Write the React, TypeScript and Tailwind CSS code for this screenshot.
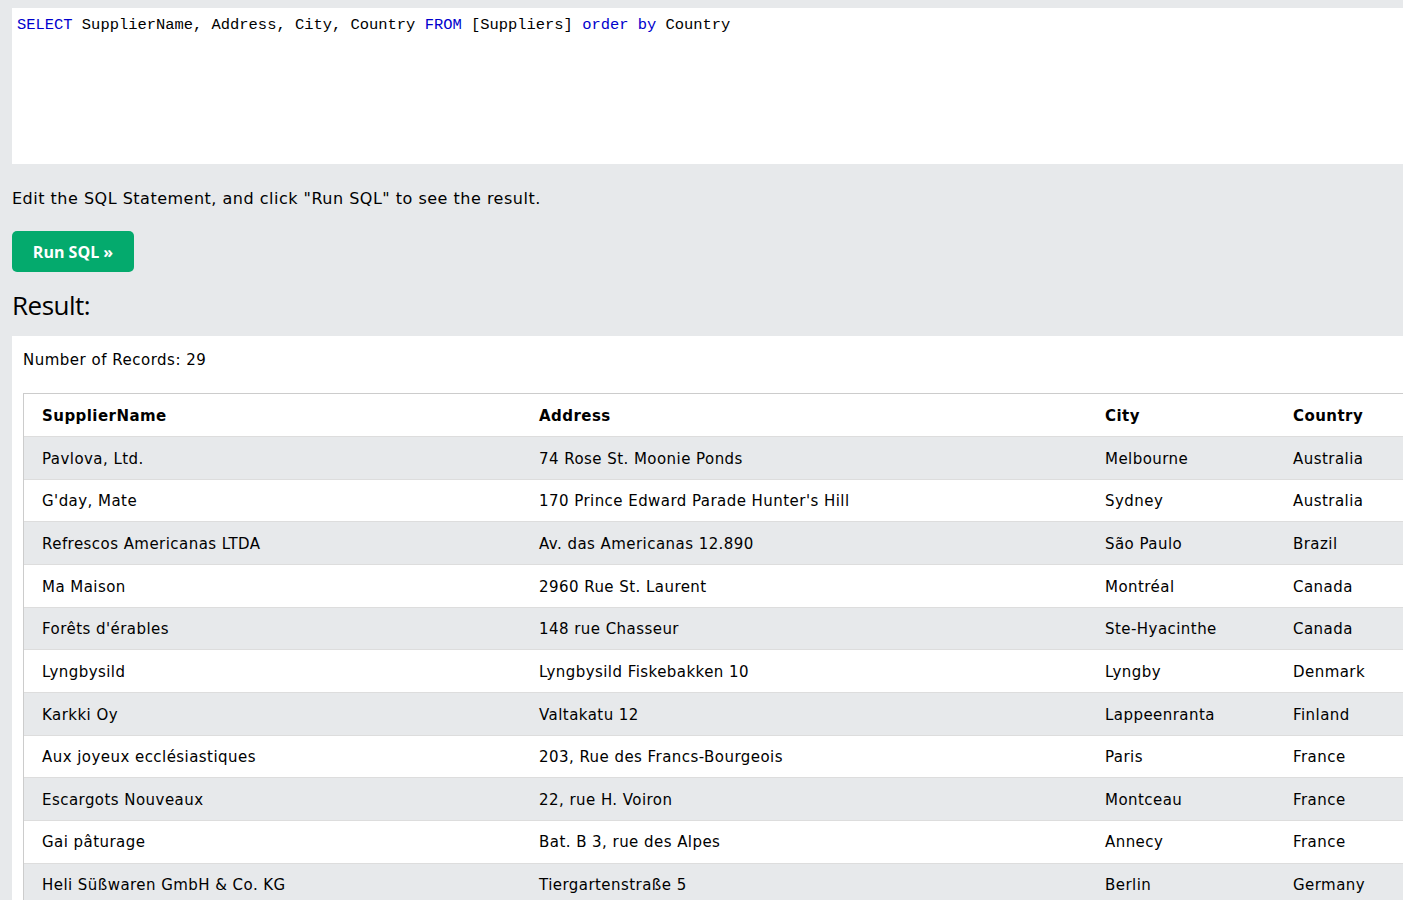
import React from "react";

const rows: [string, string, string, string][] = [
  ["Pavlova, Ltd.", "74 Rose St. Moonie Ponds", "Melbourne", "Australia"],
  ["G'day, Mate", "170 Prince Edward Parade Hunter's Hill", "Sydney", "Australia"],
  ["Refrescos Americanas LTDA", "Av. das Americanas 12.890", "São Paulo", "Brazil"],
  ["Ma Maison", "2960 Rue St. Laurent", "Montréal", "Canada"],
  ["Forêts d'érables", "148 rue Chasseur", "Ste-Hyacinthe", "Canada"],
  ["Lyngbysild", "Lyngbysild Fiskebakken 10", "Lyngby", "Denmark"],
  ["Karkki Oy", "Valtakatu 12", "Lappeenranta", "Finland"],
  ["Aux joyeux ecclésiastiques", "203, Rue des Francs-Bourgeois", "Paris", "France"],
  ["Escargots Nouveaux", "22, rue H. Voiron", "Montceau", "France"],
  ["Gai pâturage", "Bat. B 3, rue des Alpes", "Annecy", "France"],
  ["Heli Süßwaren GmbH & Co. KG", "Tiergartenstraße 5", "Berlin", "Germany"],
];

const gridCols = "grid grid-cols-[507px_566px_188px_1fr]";

export default function App() {
  return (
    <div className="w-[1403px] h-[900px] overflow-hidden bg-[#e7e9eb] text-black font-['DejaVu_Sans',Verdana,sans-serif] text-[15px] tracking-[0.45px]">
      <div className="pt-[8px] pl-[12px]">
        <div className="h-[156px] bg-white pl-[5px] pt-[6px] font-['Liberation_Mono',monospace] text-[15.45px] leading-[22px] tracking-normal whitespace-pre">
          <span className="text-[#0000cd]">SELECT</span>
          <span> SupplierName, Address, City, Country </span>
          <span className="text-[#0000cd]">FROM</span>
          <span> [Suppliers] </span>
          <span className="text-[#0000cd]">order by</span>
          <span> Country</span>
        </div>
        <p className="mt-[24px] leading-[22px] text-[16px] tracking-[0.5px]">Edit the SQL Statement, and click "Run SQL" to see the result.</p>
        <button className="mt-[21px] w-[122px] h-[41px] rounded-[5px] bg-[#04aa6d] text-white font-['Open_Sans',sans-serif] font-bold text-[16px] tracking-normal flex items-center justify-center">
          Run SQL »
        </button>
        <h2 className="mt-[14px] font-['Open_Sans',sans-serif] text-[26px] leading-[38px] tracking-[-0.5px]">Result:</h2>
      </div>
      <div className="mt-[12px] ml-[12px] bg-white pl-[11px] pt-[13px] h-[600px]">
        <div className="leading-[22px] tracking-[0.5px]">Number of Records: 29</div>
        <div className="mt-[22px] border-l border-t border-[#cccccc]">
          <div className={`${gridCols} h-[42px] pt-[2px] items-center font-bold`}>
            <div className="pl-[18px]">SupplierName</div>
            <div className="pl-[8px]">Address</div>
            <div className="pl-[8px]">City</div>
            <div className="pl-[8px]">Country</div>
          </div>
          {rows.map((r, i) => (
            <div
              key={i}
              className={`${gridCols} h-[42.67px] pt-[2px] items-center border-t border-[#dddddd] ${i % 2 === 0 ? "bg-[#e7e9eb]" : "bg-white"}`}
            >
              <div className="pl-[18px]">{r[0]}</div>
              <div className="pl-[8px]">{r[1]}</div>
              <div className="pl-[8px]">{r[2]}</div>
              <div className="pl-[8px]">{r[3]}</div>
            </div>
          ))}
        </div>
      </div>
    </div>
  );
}
